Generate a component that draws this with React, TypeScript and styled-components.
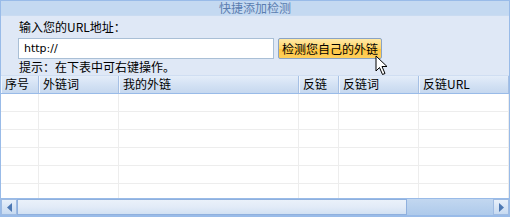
import React from 'react';
import styled, { createGlobalStyle } from 'styled-components';

const GlobalStyle = createGlobalStyle`
  html, body {
    margin: 0;
    padding: 0;
    background: #fff;
  }
  body {
    font-family: Tahoma, "DejaVu Sans", "Noto Sans CJK SC", sans-serif;
    font-size: 12px;
  }
`;

const Panel = styled.div`
  width: 510px;
  height: 217px;
  box-sizing: border-box;
  border: 1px solid #99bbe8;
  border-bottom-width: 2px;
  background: #dfe8f6;
  display: flex;
  flex-direction: column;
  overflow: hidden;
`;

const TitleBar = styled.div`
  height: 14px;
  line-height: 14px;
  background: #c4d9f1;
  color: #5a7db0;
  text-align: center;
  font-family: "Noto Sans CJK SC", sans-serif;
  font-size: 12px;
  border-bottom: 1px solid #c9dbf1;
`;

const Form = styled.div`
  padding: 2px 0 0 17px;
  display: flex;
  flex-direction: column;
  font-family: "Noto Sans CJK SC", sans-serif;
  color: #000;
`;

const Label = styled.div`
  height: 18px;
  line-height: 18px;
  padding-left: 1px;
`;

const InputRow = styled.div`
  display: flex;
  align-items: center;
  gap: 4px;
  margin-top: 2px;
  position: relative;
`;

const UrlInput = styled.input`
  width: 256px;
  height: 21px;
  box-sizing: border-box;
  border: 1px solid #a9bfd6;
  background: #fff;
  padding: 0 5px;
  font-family: Tahoma, "DejaVu Sans", sans-serif;
  font-size: 11px;
  outline: none;
`;

const CheckButton = styled.button`
  height: 21px;
  padding: 0 3px;
  box-sizing: border-box;
  border: 1px solid #8aa3c4;
  border-radius: 2px;
  background: linear-gradient(#ffe9a6, #ffd466 50%, #ffc540 51%, #ffcf5c);
  font-family: "Noto Sans CJK SC", sans-serif;
  font-size: 12px;
  color: #000;
  line-height: 19px;
  cursor: pointer;
`;

const Cursor = styled.svg`
  position: absolute;
  left: 357px;
  top: 17px;
`;

const Hint = styled.div`
  height: 16px;
  line-height: 15px;
  margin-left: 1px;
`;

const Grid = styled.div`
  flex: 1;
  display: flex;
  flex-direction: column;
  background: #fff;
  min-height: 0;
`;

const HeaderRow = styled.div`
  display: flex;
  height: 17px;
  background: linear-gradient(#e4edf9, #d4e2f4 50%, #c6d8ef);
  border-bottom: 1px solid #99bbe8;
  border-top: 1px solid #d0def2;
`;

const HeaderCell = styled.div<{ $w?: number }>`
  ${(p) => (p.$w ? `width: ${p.$w}px;` : 'flex: 1;')}
  box-sizing: border-box;
  padding-left: 4px;
  line-height: 16px;
  font-family: "Noto Sans CJK SC", sans-serif;
  font-size: 12px;
  color: #000;
  border-right: 1px solid #a6c0e4;
  box-shadow: inset 1px 0 0 #f0f5fc;
  white-space: nowrap;
`;

const Body = styled.div`
  flex: 1;
  display: flex;
  flex-direction: column;
  overflow: hidden;
`;

const Row = styled.div`
  display: flex;
  height: 18px;
  flex-shrink: 0;
  border-bottom: 1px solid #ededed;
  box-sizing: border-box;
`;

const Cell = styled.div<{ $w?: number }>`
  ${(p) => (p.$w ? `width: ${p.$w}px;` : 'flex: 1;')}
  box-sizing: border-box;
  border-right: 1px solid #ededed;
`;

const ScrollBar = styled.div`
  height: 17px;
  display: flex;
  background: #b9d0ec;
  border-top: 1px solid #99bbe8;
  box-sizing: border-box;
`;

const ArrowButton = styled.div`
  width: 16px;
  display: flex;
  align-items: center;
  justify-content: center;
  background: linear-gradient(#e8f0fa, #c7daf1);
  border: 1px solid #9fbbe2;
  box-sizing: border-box;
`;

const Thumb = styled.div`
  width: 390px;
  background: linear-gradient(#eaf1fa, #e2ebf7 50%, #d2e1f3);
  border: 1px solid #8fb0de;
  box-sizing: border-box;
`;

const Track = styled.div`
  flex: 1;
  background: linear-gradient(#c2d7f0, #aecaeb);
`;

const columns = [
  { title: '序号', w: 38 },
  { title: '外链词', w: 80 },
  { title: '我的外链', w: 180 },
  { title: '反链', w: 40 },
  { title: '反链词', w: 80 },
  { title: '反链URL' },
];

const App = (): React.ReactElement => {
  const rows = Array.from({ length: 6 });
  return (
    <>
      <GlobalStyle />
      <Panel>
        <TitleBar>快捷添加检测</TitleBar>
        <Form>
          <Label>输入您的URL地址：</Label>
          <InputRow>
            <UrlInput defaultValue="http://" />
            <CheckButton>检测您自己的外链</CheckButton>
            <Cursor width="14" height="21" viewBox="0 0 14 21">
              <path
                d="M1 1 L1 16 L4.5 12.5 L7.5 19.5 L10 18.5 L7 11.5 L12 11.5 Z"
                fill="#fff"
                stroke="#000"
                strokeWidth="1"
                strokeLinejoin="miter"
              />
            </Cursor>
          </InputRow>
          <Hint>提示：在下表中可右键操作。</Hint>
        </Form>
        <Grid>
          <HeaderRow>
            {columns.map((c) => (
              <HeaderCell key={c.title} $w={c.w}>
                {c.title}
              </HeaderCell>
            ))}
          </HeaderRow>
          <Body>
            {rows.map((_, i) => (
              <Row key={i}>
                {columns.map((c) => (
                  <Cell key={c.title} $w={c.w} />
                ))}
              </Row>
            ))}
          </Body>
          <ScrollBar>
            <ArrowButton>
              <svg width="5" height="9" viewBox="0 0 5 9">
                <path d="M5 0 L0 4.5 L5 9 Z" fill="#4d78b3" />
              </svg>
            </ArrowButton>
            <Thumb />
            <Track />
            <ArrowButton>
              <svg width="5" height="9" viewBox="0 0 5 9">
                <path d="M0 0 L5 4.5 L0 9 Z" fill="#4d78b3" />
              </svg>
            </ArrowButton>
          </ScrollBar>
        </Grid>
      </Panel>
    </>
  );
};

export default App;
